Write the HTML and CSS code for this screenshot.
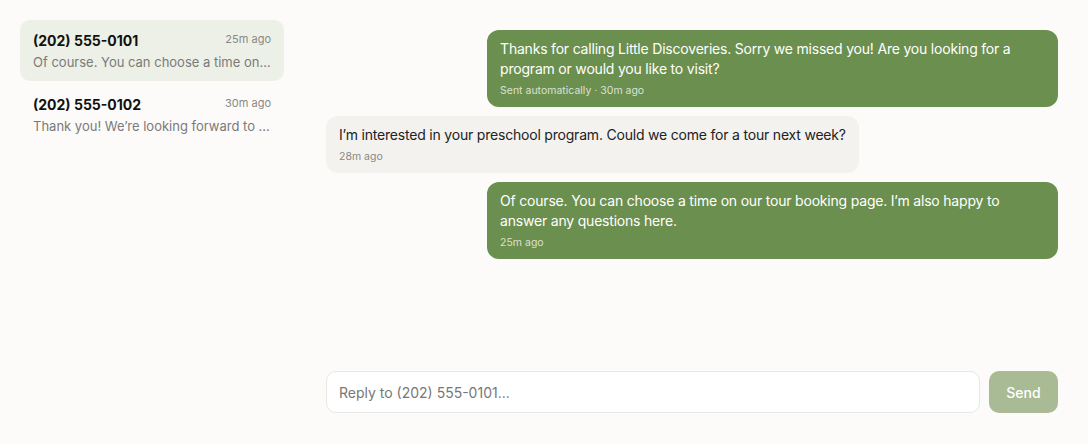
FILE: index.html
```html
<!DOCTYPE html>
<html lang="en">
<head>
<meta charset="utf-8">
<title>Messages</title>
<link rel="stylesheet" href="styles.css">
</head>
<body>
<div class="app">
  <aside class="sidebar">
    <div class="thread active">
      <div class="thread-top">
        <span class="phone">(202) 555-0101</span>
        <span class="time">25m ago</span>
      </div>
      <div class="preview">Of course. You can choose a time on our tour booking page. I’m also happy to answer any questions here.</div>
    </div>
    <div class="thread">
      <div class="thread-top">
        <span class="phone">(202) 555-0102</span>
        <span class="time">30m ago</span>
      </div>
      <div class="preview">Thank you! We’re looking forward to visiting next week.</div>
    </div>
  </aside>
  <main class="chat">
    <div class="messages">
      <div class="bubble out">
        <div class="text">Thanks for calling Little Discoveries. Sorry we missed you! Are you looking for a program or would you like to visit?</div>
        <div class="meta">Sent automatically · 30m ago</div>
      </div>
      <div class="bubble in">
        <div class="text">I’m interested in your preschool program. Could we come for a tour next week?</div>
        <div class="meta">28m ago</div>
      </div>
      <div class="bubble out">
        <div class="text">Of course. You can choose a time on our tour booking page. I’m also happy to answer any questions here.</div>
        <div class="meta">25m ago</div>
      </div>
    </div>
    <form class="composer">
      <input class="reply" type="text" placeholder="Reply to (202) 555-0101...">
      <button class="send" type="button">Send</button>
    </form>
  </main>
</div>
</body>
</html>
```
FILE: styles.css
```css
* { box-sizing: border-box; }
html, body {
  margin: 0;
  height: 100%;
  background: #fcfbf9;
  font-family: Inter, "Noto Sans", sans-serif;
  color: #1f1f1f;
}
.app {
  display: flex;
  height: 444px;
}
.sidebar {
  width: 306px;
  flex: none;
  padding: 20px 22px 0 20px;
  display: flex;
  flex-direction: column;
  gap: 3px;
}
.thread {
  padding: 11px 13px 10px;
  border-radius: 10px;
}
.thread.active {
  background: #edf0e7;
}
.thread-top {
  display: flex;
  justify-content: space-between;
  align-items: flex-start;
}
.phone {
  font-size: 14px;
  font-weight: 700;
  line-height: 20px;
  color: #111;
}
.time {
  font-size: 11px;
  line-height: 14px;
  color: #888;
  padding-top: 1px;
}
.preview {
  margin-top: 2px;
  font-size: 13px;
  line-height: 18px;
  color: #7a7a7a;
  white-space: nowrap;
  overflow: hidden;
  text-overflow: ellipsis;
}
.chat {
  flex: 1;
  display: flex;
  flex-direction: column;
  padding: 30px 30px 31px 20px;
}
.messages {
  flex: 1;
  display: flex;
  flex-direction: column;
  gap: 9px;
}
.bubble {
  max-width: 78%;
  padding: 9px 13px 9px;
  border-radius: 12px;
}
.bubble.out {
  align-self: flex-end;
  background: #6b8f4e;
  color: #fff;
}
.bubble.in {
  align-self: flex-start;
  background: #f3f2ef;
  color: #222;
}
.text {
  font-size: 14px;
  line-height: 20px;
  letter-spacing: -0.2px;
}
.meta {
  margin-top: 4px;
  font-size: 10.5px;
  line-height: 15px;
}
.bubble.out .meta { color: rgba(255,255,255,0.75); }
.bubble.in .meta { color: #888; }
.composer {
  display: flex;
  gap: 9px;
  margin: 0;
}
.reply {
  flex: 1;
  height: 42px;
  border: 1px solid #e9e7e3;
  border-radius: 10px;
  background: #fff;
  padding: 0 12px;
  font-family: inherit;
  font-size: 14px;
  color: #222;
  outline: none;
}
.reply::placeholder { color: #777; }
.send {
  width: 69px;
  height: 42px;
  border: none;
  border-radius: 10px;
  background: #a8bb94;
  color: #fff;
  font-family: inherit;
  font-size: 14px;
  font-weight: 500;
}
```
